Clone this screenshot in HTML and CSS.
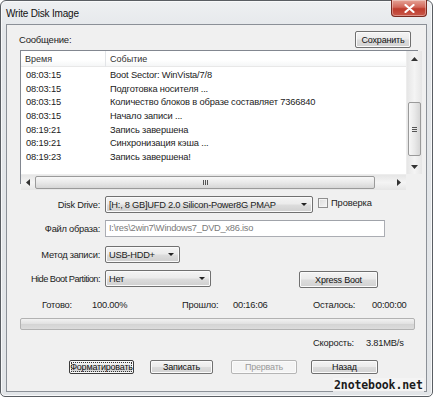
FILE: index.html
```html
<!DOCTYPE html>
<html>
<head>
<meta charset="utf-8">
<link rel="stylesheet" href="styles.css">
</head>
<body>
<div class="window">
  <div class="titlebar">
    <span class="title">Write Disk Image</span>
    <div class="close"><svg width="11" height="9" viewBox="0 0 11 9"><path d="M1.5 1 L9.5 8 M9.5 1 L1.5 8" stroke="#fff" stroke-width="2.2" stroke-linecap="round"/></svg></div>
  </div>
  <div class="panel">
    <div class="toprow">
      <span class="msg-label">Сообщение:</span>
      <button class="btn save">Сохранить</button>
    </div>
    <div class="listbox">
      <div class="list-content">
        <div class="list-head">
          <span class="c1">Время</span><span class="c2">Событие</span>
        </div>
        <div class="row"><span class="c1">08:03:15</span><span class="c2">Boot Sector: WinVista/7/8</span></div>
        <div class="row"><span class="c1">08:03:15</span><span class="c2">Подготовка носителя ...</span></div>
        <div class="row"><span class="c1">08:03:15</span><span class="c2">Количество блоков в образе составляет 7366840</span></div>
        <div class="row"><span class="c1">08:03:15</span><span class="c2">Начало записи ...</span></div>
        <div class="row"><span class="c1">08:19:21</span><span class="c2">Запись завершена</span></div>
        <div class="row"><span class="c1">08:19:21</span><span class="c2">Синхронизация кэша ...</span></div>
        <div class="row"><span class="c1">08:19:23</span><span class="c2">Запись завершена!</span></div>
      </div>
      <div class="vscroll">
        <div class="arrow"><svg width="7" height="4" viewBox="0 0 7 4"><path d="M0 4 L3.5 0 L7 4Z" fill="#333"/></svg></div>
        <div class="vtrack"><div class="vthumb"><span class="grip-h"></span><span class="grip-h"></span><span class="grip-h"></span></div></div>
        <div class="arrow"><svg width="7" height="4" viewBox="0 0 7 4"><path d="M0 0 L3.5 4 L7 0Z" fill="#333"/></svg></div>
      </div>
      <div class="hscroll">
        <div class="harrow"><svg width="4" height="7" viewBox="0 0 4 7"><path d="M4 0 L0 3.5 L4 7Z" fill="#333"/></svg></div>
        <div class="htrack"><div class="hthumb"><span class="grip-v"></span><span class="grip-v"></span><span class="grip-v"></span></div></div>
        <div class="harrow"><svg width="4" height="7" viewBox="0 0 4 7"><path d="M0 0 L4 3.5 L0 7Z" fill="#333"/></svg></div>
      </div>
      <div class="corner"></div>
    </div>

    <div class="form">
      <div class="frow r1">
        <span class="lbl">Disk Drive:</span>
        <div class="combo w-drive"><span>[H:, 8 GB]UFD 2.0 Silicon-Power8G PMAP</span><i class="dd"></i></div>
        <span class="check"></span><span class="chk-lbl">Проверка</span>
      </div>
      <div class="frow r2">
        <span class="lbl">Файл образа:</span>
        <div class="input">I:\res\2win7\Windows7_DVD_x86.iso</div>
      </div>
      <div class="frow r3">
        <span class="lbl">Метод записи:</span>
        <div class="combo w-method"><span>USB-HDD+</span><i class="dd"></i></div>
      </div>
      <div class="frow r4">
        <span class="lbl">Hide Boot Partition:</span>
        <div class="combo w-hide"><span>Нет</span><i class="dd"></i></div>
        <button class="btn xpress">Xpress Boot</button>
      </div>
    </div>

    <div class="stats">
      <span class="s-a">Готово:</span>
      <span class="s-b">100.00%</span>
      <span class="s-c">Прошло:</span>
      <span class="s-d">00:16:06</span>
      <span class="s-e">Осталось:</span>
      <span class="s-f">00:00:00</span>
    </div>
    <div class="progress"></div>
    <div class="speed">
      <span class="s-e">Скорость:</span>
      <span class="s-f">3.81MB/s</span>
    </div>
    <div class="buttons">
      <button class="btn b-format">Форматировать</button>
      <button class="btn b-write">Записать</button>
      <button class="btn b-abort" disabled>Прервать</button>
      <button class="btn b-back">Назад</button>
    </div>
  </div>
  <div class="watermark">2notebook.net</div>
</div>
</body>
</html>
```

FILE: styles.css
```css
* { box-sizing: border-box; }
html, body { margin: 0; padding: 0; background: #ffffff; }
body { width: 434px; height: 399px; overflow: hidden; font-family: "Liberation Sans", Arial, sans-serif; font-size: 9px; color: #222; }

.window {
  position: relative;
  width: 433px;
  height: 397px;
  border: 1px solid #5a5e63;
  border-radius: 6px 6px 5px 5px;
  background: linear-gradient(#eef0f2, #e4e7ea 30px, #e2e5e8);
  box-shadow: inset 0 0 0 1px #f8f9fa;
}

.titlebar {
  height: 23px;
  display: flex;
  align-items: flex-start;
  justify-content: space-between;
}
.title { font-size: 10px; color: #111; margin: 7px 0 0 5px; letter-spacing: -0.2px; }
.close {
  width: 36px; height: 17px; margin-right: 5px; margin-top: -1px;
  border: 1px solid #7a2a20;
  border-top: none;
  border-radius: 0 0 4px 4px;
  background: linear-gradient(#e6a496, #d2675a 45%, #be3b2c 55%, #c9584a);
  display: flex; align-items: center; justify-content: center;
  box-shadow: inset 0 0 0 1px rgba(255,255,255,0.35);
}

.panel {
  margin-left: 5px;
  width: 421px;
  height: 368px;
  border: 1px solid #8b9097;
  background: #f0f0f0;
  padding: 6px 0 0 12px;
}

.toprow { display: flex; justify-content: space-between; align-items: flex-end; width: 392px; height: 17px; }
.msg-label { font-size: 9.5px; margin-bottom: 3px; letter-spacing: -0.2px; }

.btn {
  font-family: "Liberation Sans", Arial, sans-serif;
  font-size: 9px;
  letter-spacing: -0.2px;
  color: #111;
  padding: 0;
  border: 1px solid #707070;
  border-radius: 2px;
  background: linear-gradient(#f4f4f4, #ebebeb 48%, #dcdcdc 52%, #d2d2d2);
  box-shadow: inset 0 0 0 1px #fbfbfb;
  height: 17px;
}
.save { width: 56px; }

.listbox {
  margin-top: 2px;
  margin-left: 1px;
  width: 398px;
  height: 134px;
  border: 1px solid #828790;
  background: #fff;
  display: grid;
  grid-template-columns: 1fr 16px;
  grid-template-rows: 1fr 16px;
}
.list-content { overflow: hidden; }
.list-head {
  height: 16px;
  display: flex; align-items: center;
  border-bottom: 1px solid #e8e8e8;
  background: linear-gradient(#ffffff, #ffffff 60%, #f5f6f7);
  color: #333;
}
.list-head .c1 { border-right: 1px solid #e3e5e8; height: 16px; line-height: 16px; padding-left: 4px; }
.list-head .c2 { padding-left: 4px; }
.c1 { width: 85px; flex: none; padding-left: 5px; }
.c2 { padding-left: 4px; white-space: nowrap; }
.row { height: 13.6px; display: flex; align-items: center; }
.list-head + .row { margin-top: 1.5px; }
.row span { letter-spacing: -0.15px; font-size: 9.3px; }

.vscroll {
  background: linear-gradient(90deg, #e6e6e6, #f4f4f4 50%, #e6e6e6);
  display: flex; flex-direction: column;
  border-left: 1px solid #ededed;
}
.arrow { height: 15px; display: flex; align-items: center; justify-content: center; }
.vtrack { flex: 1; padding: 36px 0 3px 0; }
.vthumb {
  height: 54px;
  margin: 0 1px;
  border: 1px solid #9a9a9a;
  border-radius: 2px;
  background: linear-gradient(90deg, #f7f7f7, #e9e9e9 50%, #d6d6d6);
  display: flex; flex-direction: column; align-items: center; justify-content: center; gap: 1px;
}
.grip-h { width: 5px; height: 1px; background: #555; }

.hscroll {
  background: linear-gradient(#e6e6e6, #f4f4f4 50%, #e6e6e6);
  display: flex; align-items: center;
  border-top: 1px solid #ededed;
}
.harrow { width: 14px; height: 15px; display: flex; align-items: center; justify-content: center; }
.htrack { flex: 1; height: 15px; padding: 1px 17px 1px 0; }
.hthumb {
  height: 13px;
  width: 340px;
  border: 1px solid #9a9a9a;
  border-radius: 2px;
  background: linear-gradient(#f7f7f7, #e9e9e9 50%, #d6d6d6);
  display: flex; align-items: center; justify-content: center; gap: 1px;
}
.grip-v { width: 1px; height: 5px; background: #555; }
.corner { background: #f0f0f0; }

.form { margin-top: 12px; margin-left: -12px; }
.frow { display: flex; align-items: center; height: 17px; }
.r2 { margin-top: 7px; }
.r3 { margin-top: 9px; }
.r4 { margin-top: 7px; }
.lbl { width: 93px; text-align: right; margin-right: 5px; font-size: 9.3px; letter-spacing: -0.25px; }
.r4 .lbl { letter-spacing: -0.55px; }

.combo {
  height: 17px;
  border: 1px solid #707070;
  border-radius: 2px;
  background: linear-gradient(#f4f4f4, #ebebeb 48%, #dddddd 52%, #cfcfcf);
  box-shadow: inset 0 0 0 1px #fafafa;
  display: flex; align-items: center; justify-content: space-between;
  padding: 0 5px 0 3px;
  font-size: 9.3px; letter-spacing: -0.25px;
  white-space: nowrap;
}
.dd { width: 0; height: 0; border-left: 3px solid transparent; border-right: 3px solid transparent; border-top: 3px solid #222; }
.w-drive { width: 208px; }
.w-method { width: 75px; }
.w-hide { width: 106px; }

.check {
  width: 10px; height: 10px; margin-left: 5px;
  border: 1px solid #8f8f8f;
  background: linear-gradient(135deg, #dcdcdc, #f6f6f6);
  box-shadow: inset 0 0 0 1px #f4f4f4;
  align-self: flex-start; margin-top: 2px;
}
.chk-lbl { margin-left: 3px; align-self: flex-start; margin-top: 2px; font-size: 9.3px; letter-spacing: -0.1px; }

.input {
  width: 280px; height: 17px;
  border: 1px solid #abadb3;
  border-top-color: #a0a3aa;
  background: #fff;
  color: #7a7a7a;
  padding-left: 3px;
  line-height: 15px;
  font-size: 9.3px; letter-spacing: -0.25px;
}
.xpress { width: 79px; margin-left: 88px; height: 17px; margin-top: 2px; }

.stats { display: flex; margin-top: 11px; margin-left: 23px; height: 14px; align-items: center; font-size: 9.3px; letter-spacing: -0.2px; }
.s-a { width: 50px; }
.s-b { width: 90px; }
.s-c { width: 51px; }
.s-d { width: 80px; }
.s-e { width: 59px; }
.progress {
  margin-top: 6px; margin-left: 1px;
  width: 395px; height: 12px;
  border: 1px solid #b2b2b2;
  border-radius: 2px;
  background: linear-gradient(#f2f2f2, #e2e2e2 45%, #d4d4d4 55%, #dcdcdc);
}
.speed { display: flex; margin-top: 6px; margin-left: 294px; height: 14px; align-items: center; font-size: 9.3px; letter-spacing: -0.2px; }
.speed .s-e { width: 53px; }

.buttons { display: flex; margin-top: 10px; height: 14px; margin-left: 50px; }
.buttons .btn { height: 14px; font-size: 9px; }
.b-format { width: 65px; border: 1px solid #3c3c3c; outline: 1px dotted #333; outline-offset: -3px; }
.b-write { width: 63px; margin-left: 16px; }
.b-abort { width: 66px; margin-left: 18px; color: #9a9a9a; border-color: #b5b5b5; background: #f4f4f4; }
.b-back { width: 67px; margin-left: 14px; }

.watermark {
  position: absolute;
  left: 332px; top: 377px;
  font-family: "DejaVu Sans Mono", monospace;
  font-weight: bold;
  font-size: 11.5px;
  color: #1b1b1b;
  background: rgba(245,245,245,0.85);
  padding: 0 1px;
  letter-spacing: -0.1px;
}
```
